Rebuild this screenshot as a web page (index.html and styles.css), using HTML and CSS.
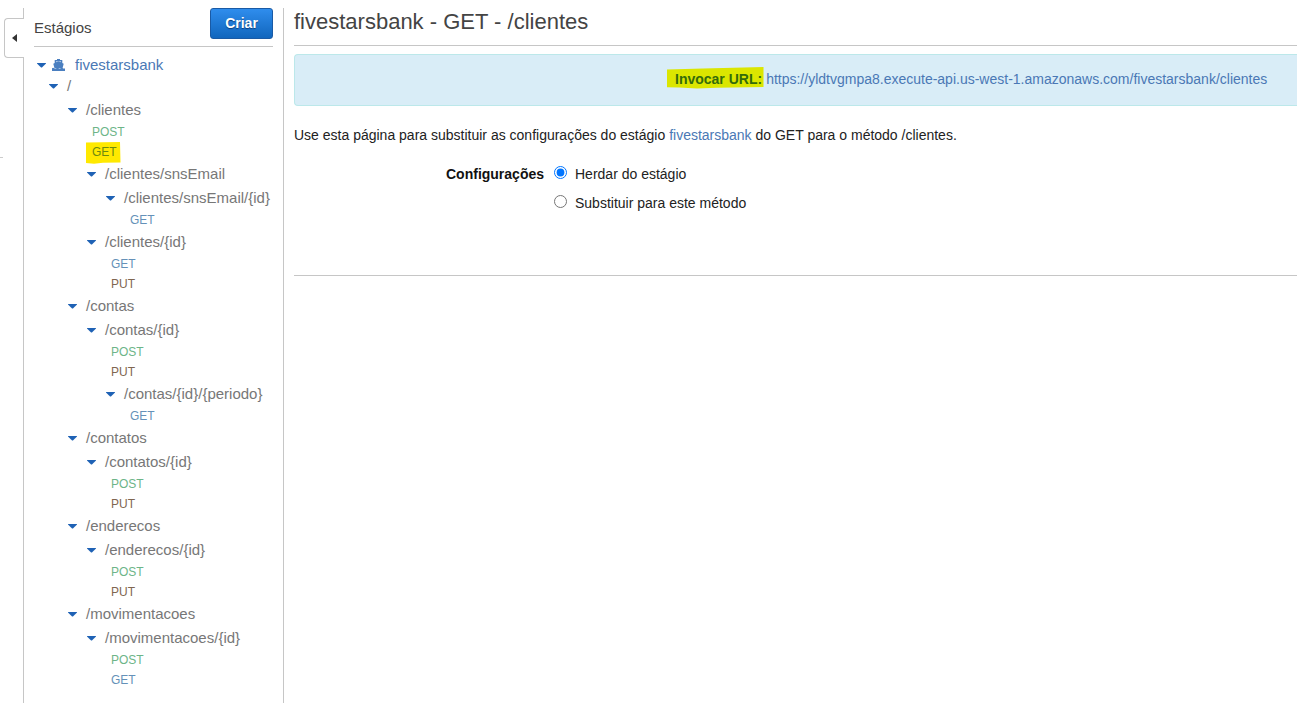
FILE: index.html
```
<!DOCTYPE html>
<html lang="pt">
<head>
<meta charset="utf-8">
<title>fivestarsbank - GET - /clientes</title>
<link rel="stylesheet" href="styles.css">
</head>
<body>
<div class="app">
  <div class="rail"><button class="collapse" aria-label="Recolher"><svg width="5" height="8" viewBox="0 0 5 8"><path d="M5 0v8L0 4z" fill="#333"/></svg></button><span class="tick"></span></div>
  <aside class="sidebar">
    <header class="side-head"><span>Estágios</span><button class="create">Criar</button></header>
    <nav class="tree">
      <div class="stage"><i class="caret"></i>
        <svg class="ship" width="13" height="12" viewBox="0 0 13 12" fill="#4a7fc0"><path d="M5 0h3v1h2.300v3l1.400.8-1.200 4.500H2.500L1.300 4.800l1.400-.8V1H5z"/><path d="M4 2.300h5v.9L6.500 2.600 4 3.200z" fill="#c5d8ee"/><path d="M0 9.300q1.100-.9 2.200 0 1.100.8 2.200 0 1.100-.9 2.200 0 1.100.8 2.200 0 1.100-.9 2.200 0 1 .7 2 0V12H0z"/></svg>
        <a>fivestarsbank</a></div>
      <div class="path root"><i class="caret"></i><span>/</span></div>
      <div class="path l1"><i class="caret"></i><span>/clientes</span></div>
      <div class="method m1 post">POST</div>
      <div class="method m1 get selected"><svg class="mark" width="35" height="22" viewBox="0 0 35 22"><path d="M0 .5 34 0l.5 20.500L17 20.800l-9 1L0 21z" fill="#ffe900"/></svg><span>GET</span></div>
      <div class="path l2"><i class="caret"></i><span>/clientes/snsEmail</span></div>
      <div class="path l3"><i class="caret"></i><span>/clientes/snsEmail/{id}</span></div>
      <div class="method m3 get">GET</div>
      <div class="path l2"><i class="caret"></i><span>/clientes/{id}</span></div>
      <div class="method m2 get">GET</div>
      <div class="method m2 put">PUT</div>
      <div class="path l1"><i class="caret"></i><span>/contas</span></div>
      <div class="path l2"><i class="caret"></i><span>/contas/{id}</span></div>
      <div class="method m2 post">POST</div>
      <div class="method m2 put">PUT</div>
      <div class="path l3"><i class="caret"></i><span>/contas/{id}/{periodo}</span></div>
      <div class="method m3 get">GET</div>
      <div class="path l1"><i class="caret"></i><span>/contatos</span></div>
      <div class="path l2"><i class="caret"></i><span>/contatos/{id}</span></div>
      <div class="method m2 post">POST</div>
      <div class="method m2 put">PUT</div>
      <div class="path l1"><i class="caret"></i><span>/enderecos</span></div>
      <div class="path l2"><i class="caret"></i><span>/enderecos/{id}</span></div>
      <div class="method m2 post">POST</div>
      <div class="method m2 put">PUT</div>
      <div class="path l1"><i class="caret"></i><span>/movimentacoes</span></div>
      <div class="path l2"><i class="caret"></i><span>/movimentacoes/{id}</span></div>
      <div class="method m2 post">POST</div>
      <div class="method m2 get">GET</div>
    </nav>
  </aside>
  <main class="main">
    <h1 class="title">fivestarsbank - GET - /clientes</h1>
    <div class="notice">
      <strong class="invoke"><svg class="mark" width="97" height="22" viewBox="0 0 97 22"><path d="M0 2.500 36 1.500 96.500 0v20L50 20.800 30 21.500 12 20.500 0 20.300z" fill="#dbe600"/></svg><span>Invocar URL:</span></strong>
      <a>https://yldtvgmpa8.execute-api.us-west-1.amazonaws.com/fivestarsbank/clientes</a>
    </div>
    <p class="intro">Use esta página para substituir as configurações do estágio <a>fivestarsbank</a> do GET para o método /clientes.</p>
    <form class="settings">
      <strong class="legend">Configurações</strong>
      <div class="options">
        <label><input type="radio" name="cfg" checked><span>Herdar do estágio</span></label>
        <label><input type="radio" name="cfg"><span>Substituir para este método</span></label>
      </div>
    </form>
  </main>
</div>
</body>
</html>
```
FILE: styles.css
```
* { box-sizing: border-box; }
body { margin: 0; background: #fff; color: #222; font: 14px/20px "Liberation Sans", Arial, sans-serif; overflow: hidden; }
a { color: #4a78b5; }
.app { display: flex; height: 703px; padding-top: 8px; }
.rail { width: 24px; flex: none; border-right: 1px solid #c6c6c6; padding: 10px 0 0 4px; }
.collapse { display: flex; align-items: center; width: 20px; height: 40px; padding: 0 0 0 7px; background: #fff; border: 1px solid #c6c6c6; border-right: 0; border-radius: 4px 0 0 4px; }
.tick { display: block; width: 3px; height: 1px; margin: 99px 0 0 -4px; background: #ccc; }
.sidebar { width: 260px; flex: none; border-right: 1px solid #c6c6c6; padding: 0 10px; }
.side-head { display: flex; justify-content: space-between; align-items: flex-start; height: 39px; border-bottom: 1px solid #c6c6c6; font-size: 15px; color: #444; }
.side-head > span { padding-top: 10px; }
.create { width: 63px; height: 31px; padding: 0 0 1px; border: 1px solid #1a5aa5; border-radius: 3px; background: linear-gradient(#2f8ded, #1166bd); color: #fff; font: bold 14px "Liberation Sans", Arial, sans-serif; text-shadow: 0 1px 1px #0a3c7a; }
.tree { padding-top: 9px; font-size: 15px; color: #777; }
.stage { display: flex; align-items: center; height: 18px; padding-left: 3px; }
.ship { margin: 0 10px 0 6px; }
.caret { width: 9px; height: 5px; flex: none; background: #1f62b5; clip-path: polygon(0 0, 100% 0, 100% 20%, 55% 100%, 45% 100%, 0 20%); }
.path { display: flex; align-items: center; gap: 9px; height: 24px; }
.path > span { white-space: nowrap; }
.root { padding-left: 15px; }
.l1 { padding-left: 34px; }
.l2 { padding-left: 53px; }
.l3 { padding-left: 72px; }
.method { height: 20px; font-size: 12px; line-height: 20px; }
.m1 { padding-left: 58px; }
.m2 { padding-left: 77px; }
.m3 { padding-left: 96px; }
.post { color: #6db588; }
.get { color: #6591b8; }
.put { color: #806650; }
.selected { position: relative; color: #6d8a10; }
.selected > span, .invoke > span { position: relative; }
.selected .mark { position: absolute; left: 52px; top: 0; }
.main { flex: 1; min-width: 0; padding-left: 10px; }
.title { margin: 0; height: 38px; padding-top: 1px; border-bottom: 1px solid #c6c6c6; font-size: 22px; line-height: 26px; font-weight: normal; color: #444; white-space: nowrap; }
.notice { display: flex; gap: 4px; height: 52px; margin-top: 8px; padding: 14px 0 0 380px; background: #d9edf7; border: 1px solid #bce8ea; border-right: 0; border-radius: 4px 0 0 4px; white-space: nowrap; }
.invoke { position: relative; color: #336b0b; }
.invoke .mark { position: absolute; left: -8px; top: -2px; }
.intro { margin: 19px 0 0; white-space: nowrap; }
.settings { display: flex; height: 131px; padding: 19px 0 0 152px; border-bottom: 1px solid #c6c6c6; }
.legend { width: 98px; color: #111; }
.options { display: flex; flex-direction: column; gap: 9px; padding-left: 10px; }
.options label { display: flex; height: 20px; }
.options input { width: 13px; height: 13px; margin: 2px 8px 0 0; }
```
